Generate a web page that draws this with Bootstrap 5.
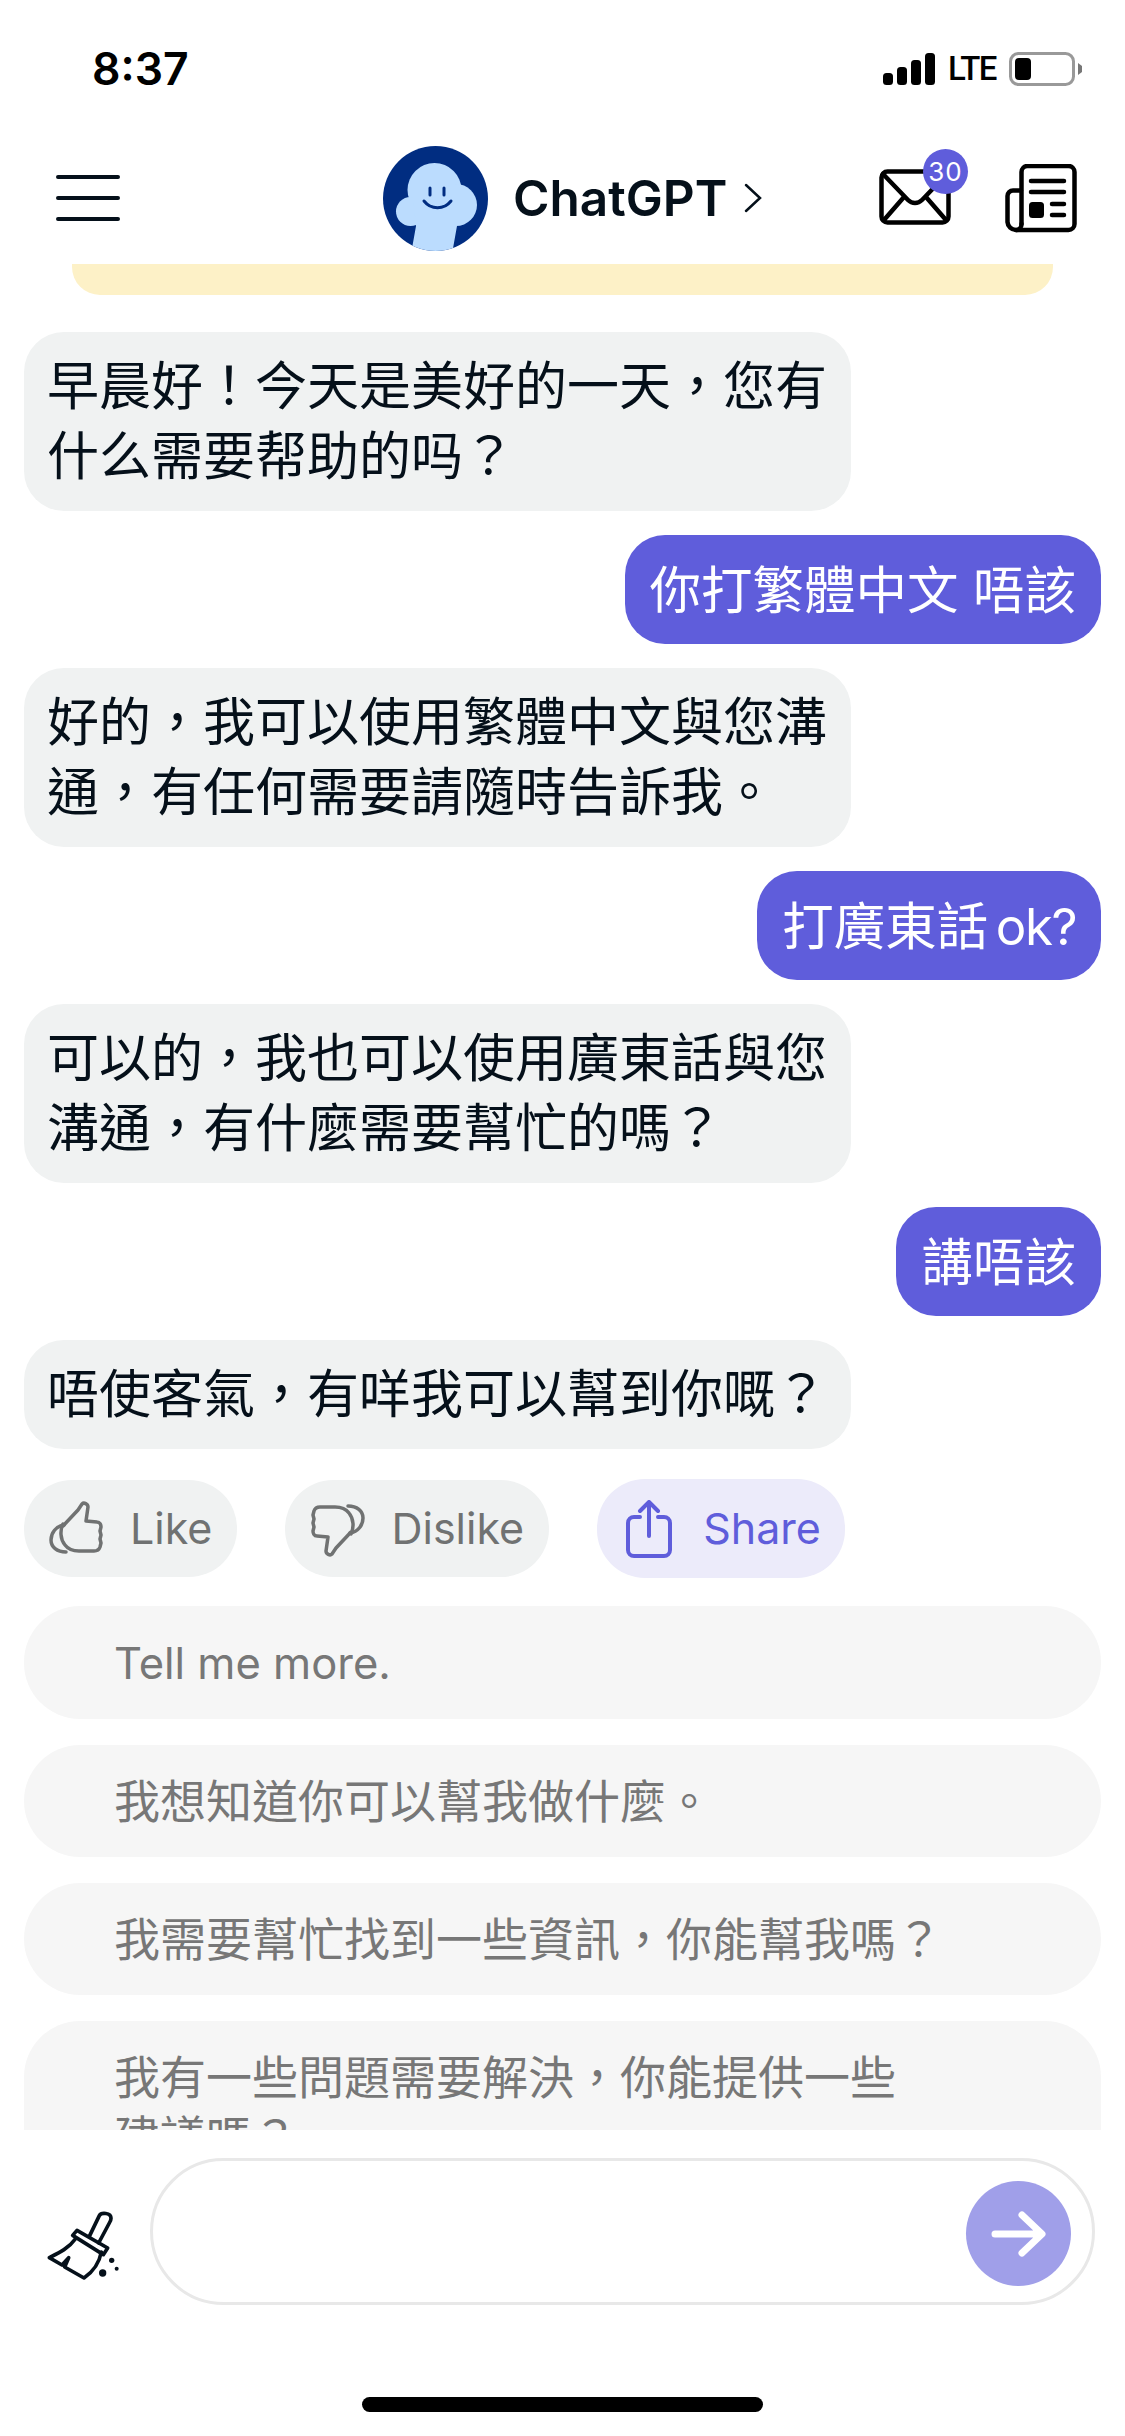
<!DOCTYPE html>
<html lang="zh-Hant">
<head>
    <meta charset="UTF-8">
    <meta name="viewport" content="width=device-width, initial-scale=1.0">
    <title>ChatGPT</title>
    <link href="https://cdn.jsdelivr.net/npm/bootstrap@5.3.0/dist/css/bootstrap.min.css" rel="stylesheet">
    <style>
        body { width: 1125px; height: 2436px; overflow: hidden; font-family: Inter, "Noto Sans CJK TC", sans-serif; color: #05101a; background: #fff; }
        .status-row { height: 120px; padding: 44px 43px 0 92px; }
        .status-time { font-size: 44.5px; font-weight: 600; line-height: 50px; color: #000; }
        .status-right { margin-top: 5px; height: 40px; }
        .status-lte { font-family: Roboto, sans-serif; font-size: 33px; font-weight: 500; color: #000; line-height: 40px; letter-spacing: -1.5px; margin: 0 13px; }
        .top-bar { height: 144px; padding: 12px 48px 0 56px; }
        .top-center { margin-left: 263px; }
        .top-title { font-size: 49.5px; font-weight: 600; line-height: 60px; margin-left: 25px; }
        .top-right { gap: 37px; }
        .mail-wrap { width: 89px; height: 76px; margin-bottom: 22px; }
        .mail-count { position: absolute; left: 44px; top: 0; width: 45px; height: 45px; background: #5f5ddb; color: #fff; font-size: 26px; line-height: 45px; text-align: center; letter-spacing: 1px; }
        .chat-area { height: 1866px; overflow: hidden; }
        .notice-end { height: 31px; margin: 0 72px 37px; background: #fdf1c7; border-radius: 0 0 28px 28px; }
        .chat-list { padding: 0 24px; gap: 24px; }
        .bubble-bot, .bubble-me { font-size: 52px; line-height: 70px; padding: 19.5px 23px; border-radius: 40px; }
        .bubble-bot { width: 827px; background: #f0f2f2; }
        .bubble-me { background: #5f5ddb; color: #fff; font-size: 51.5px; padding: 19.5px 25px; }
        .bubble-latin { font-size: 51px; line-height: 1; letter-spacing: -1.5px; margin-left: -7px; }
        .react-row { padding: 30px 24px 28px; gap: 48px; }
        .react-btn { height: 97px; font-size: 43px; border-radius: 48px; background: #f0f2f2; color: #707272; border: 0; padding: 0 25px; gap: 26px; }
        .react-btn:hover { background: #f0f2f2; color: #707272; }
        .react-share { background: #ecebfa; color: #5f5ddb; height: 99px; padding: 0 24px 0 29px; gap: 31px; }
        .react-share:hover { background: #ecebfa; color: #5f5ddb; }
        .hint-list { padding: 0 24px; gap: 26px; }
        .hint-item { background: #f6f6f6; color: #777; font-size: 46px; line-height: 60px; padding: 26px 140px 26px 90px; border-radius: 56px; }
        .hint-latin { font-size: 43.5px; }
        .composer { height: 306px; padding: 28px 30px 0 46px; }
        .broom-icon { margin-top: 50px; }
        .composer-box { width: 945px; height: 147px; border: 3px solid #e8e8e8; padding-right: 21px; }
        .send-btn { width: 105px; height: 105px; background: #a09fe9; border: 0; padding: 0; margin-top: 4px; }
        .home-bar { width: 401px; height: 15px; background: #000; border-radius: 8px; left: 362px; top: 2397px; }
    </style>
</head>
<body>
<!-- Status bar -->
<div class="status-row d-flex justify-content-between align-items-start">
    <span class="status-time">8:37</span>
    <div class="status-right d-flex align-items-center">
        <svg width="52" height="32" viewBox="0 0 52 32"><g fill="#000"><rect x="0" y="20" width="10" height="12" rx="3.500"/><rect x="14" y="14" width="10" height="18" rx="3.500"/><rect x="28" y="7" width="10" height="25" rx="3.500"/><rect x="42" y="0" width="10" height="32" rx="3.500"/></g></svg>
        <span class="status-lte">LTE</span>
        <svg width="73" height="34" viewBox="0 0 73 34"><rect x="1.500" y="1.500" width="63" height="31" rx="8" fill="none" stroke="#999" stroke-width="3"/><rect x="6" y="6" width="16" height="22" rx="4" fill="#000"/><path d="M69 11l4 3v6l-4 3z" fill="#777"/></svg>
    </div>
</div>

<!-- Top bar -->
<nav class="top-bar d-flex align-items-center position-relative">
    <svg width="64" height="46" viewBox="0 0 64 46"><g stroke="#05101a" stroke-width="4" stroke-linecap="round"><path d="M2 2h60M2 23h60M2 44h60"/></g></svg>
    <div class="top-center d-flex align-items-center me-auto">
        <svg width="105" height="105" viewBox="0 0 105 105">
            <defs><clipPath id="avatarClip"><circle cx="52.5" cy="52.5" r="52.5"/></clipPath></defs>
            <circle cx="52.5" cy="52.5" r="52.5" fill="#012d81"/>
            <g clip-path="url(#avatarClip)" fill="#bbdcfe">
                <circle cx="51.500" cy="44" r="27"/>
                <circle cx="27.500" cy="65.500" r="14.500"/>
                <circle cx="73" cy="59" r="21"/>
                <path d="M30 50h44v30l-5 28H28l5-28z"/>
            </g>
            <path d="M47 42v7M61 42v7" stroke="#012d81" stroke-width="3" stroke-linecap="round"/>
            <path d="M41 55c7 9 20 9 27 0" fill="none" stroke="#012d81" stroke-width="3" stroke-linecap="round"/>
        </svg>
        <span class="top-title">ChatGPT</span>
        <svg class="ms-3" width="20" height="30" viewBox="0 0 20 30"><path d="M3 2l14 13L3 28" fill="none" stroke="#05101a" stroke-width="2.500" stroke-linecap="round"/></svg>
    </div>
    <div class="top-right d-flex align-items-center">
        <div class="mail-wrap position-relative">
            <svg class="position-absolute bottom-0 start-0" width="72" height="56" viewBox="0 0 72 56"><g fill="none" stroke="#000" stroke-width="4.500" stroke-linejoin="round" stroke-linecap="round"><rect x="2.500" y="2.500" width="67" height="51" rx="6"/><path d="M4 5l25 26c4 4 10 4 14 0L68 5M5 51l20-23M67 51L47 28"/></g></svg>
            <span class="mail-count rounded-circle">30</span>
        </div>
        <svg width="72" height="69" viewBox="0 0 72 69"><g fill="none" stroke="#000" stroke-width="4.500" stroke-linecap="round" stroke-linejoin="round"><path d="M16.500 60V8a6 6 0 0 1 6-6h41a6 6 0 0 1 6 6v52a6 6 0 0 1-6 6H11"/><path d="M16.500 60c0 3-2 6-5.500 6a8.500 8.500 0 0 1-8.500-8V32A5.500 5.500 0 0 1 8 26.500h8"/><path d="M26 17h33M26 28h33M47 40h12M47 51h12"/></g><rect x="24" y="38" width="15" height="16" rx="3.500" fill="#000"/></svg>
    </div>
</nav>

<!-- Conversation -->
<main class="chat-area">
    <div class="notice-end"></div>
    <div class="chat-list d-flex flex-column">
        <div class="bubble-bot">早晨好！今天是美好的一天，您有什么需要帮助的吗？</div>
        <div class="bubble-me align-self-end">你打繁體中文 唔該</div>
        <div class="bubble-bot">好的，我可以使用繁體中文與您溝通，有任何需要請隨時告訴我。</div>
        <div class="bubble-me align-self-end">打廣東話 <span class="bubble-latin">ok?</span></div>
        <div class="bubble-bot">可以的，我也可以使用廣東話與您溝通，有什麼需要幫忙的嗎？</div>
        <div class="bubble-me align-self-end">講唔該</div>
        <div class="bubble-bot">唔使客氣，有咩我可以幫到你嘅？</div>
    </div>

    <div class="react-row d-flex align-items-center">
        <button class="btn react-btn d-flex align-items-center" type="button">
            <svg width="55" height="56" viewBox="-2 -2 55 56">
                <g id="thumbIcon" fill="none" stroke="#707272" stroke-width="3.500" stroke-linejoin="round" stroke-linecap="round">
                    <path d="M12 23L27 7l4-6c2-2 6 0 6 3l-2 14 11 1c3 0 4 3 4 5l-1 4 1 4-1 4 1 4-1 4c-1 3-3 4-6 4H28c-6 0-11-2-14-6-5-6-5-15-2-21z"/>
                    <path d="M13 22C5 23 0 30 0 37c0 7 6 12 15 12"/>
                </g>
            </svg>
            Like
        </button>
        <button class="btn react-btn d-flex align-items-center" type="button">
            <svg width="55" height="56" viewBox="-2 -2 55 56"><use href="#thumbIcon" transform="rotate(180 25.500 26)"/></svg>
            Dislike
        </button>
        <button class="btn react-btn react-share d-flex align-items-center" type="button">
            <svg width="46" height="58" viewBox="0 0 46 58"><g fill="none" stroke="#5f5ddb" stroke-width="4" stroke-linecap="round" stroke-linejoin="round"><path d="M14 17H8a6 6 0 0 0-6 6v27a6 6 0 0 0 6 6h30a6 6 0 0 0 6-6V23a6 6 0 0 0-6-6h-6"/><path d="M23 36V2M14 11l9-9 9 9"/></g></svg>
            Share
        </button>
    </div>

    <div class="hint-list d-flex flex-column">
        <div class="hint-item"><span class="hint-latin">Tell me more.</span></div>
        <div class="hint-item">我想知道你可以幫我做什麼。</div>
        <div class="hint-item">我需要幫忙找到一些資訊，你能幫我嗎？</div>
        <div class="hint-item">我有一些問題需要解決，你能提供一些<span class="text-nowrap">建議</span>嗎？</div>
    </div>
</main>

<!-- Composer -->
<footer class="composer d-flex align-items-start justify-content-between">
    <svg class="broom-icon" width="75" height="75" viewBox="50 55 225 225">
        <g fill="none" stroke="#05101a" stroke-width="11" stroke-linejoin="round" stroke-linecap="round">
            <path d="M180 140l30-62c5-10 35-10 35 8 0 6-2 10-5 14l-32 60"/>
            <path d="M143 122l-13 15 92 58 13-20z"/>
            <path d="M138 148c-20 28-50 42-78 56l38 22 20-22-12 28 58 33c26-18 46-46 52-78"/>
        </g>
        <circle cx="247" cy="212" r="8" fill="#05101a"/><circle cx="262" cy="237" r="6" fill="#05101a"/><circle cx="220" cy="250" r="11" fill="#05101a"/>
    </svg>
    <div class="composer-box rounded-pill d-flex align-items-center justify-content-end">
        <button class="send-btn rounded-circle d-flex align-items-center justify-content-center" type="button">
            <svg width="56" height="46" viewBox="0 0 56 46"><g fill="none" stroke="#fff" stroke-width="7" stroke-linecap="round" stroke-linejoin="round"><path d="M4 23h46M31 4l20 19-20 19"/></g></svg>
        </button>
    </div>
</footer>
<div class="home-bar position-absolute"></div>
</body>
</html>
